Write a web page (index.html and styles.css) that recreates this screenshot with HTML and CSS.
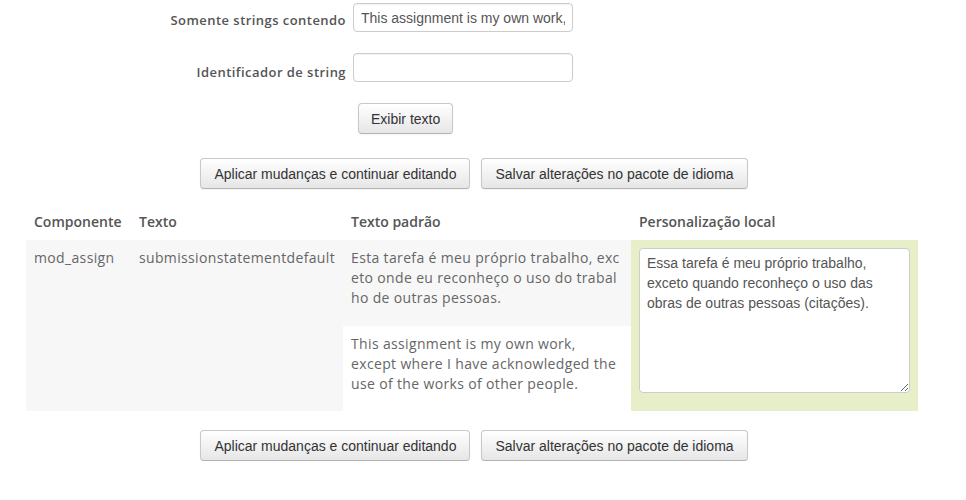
FILE: index.html
```html
<!DOCTYPE html>
<html lang="pt-br">
<head>
  <meta charset="UTF-8" />
  <title>Personalização do idioma</title>
  <link rel="stylesheet" href="styles.css">
</head>
<body>
  <div class="page">
    <!-- Filter -->
    <form class="filter">
      <div class="form-row">
        <label class="form-label" for="substring">Somente strings contendo</label>
        <input class="text-input" id="substring" type="text" value="This assignment is my own work,">
      </div>
      <div class="form-row">
        <label class="form-label label-low" for="stringid">Identificador de string</label>
        <input class="text-input" id="stringid" type="text">
      </div>
      <div class="form-row submit-row">
        <button class="btn" type="button">Exibir texto</button>
      </div>
    </form>

    <div class="actions">
      <button class="btn" type="button">Aplicar mudanças e continuar editando</button>
      <button class="btn" type="button">Salvar alterações no pacote de idioma</button>
    </div>

    <!-- Translator -->
    <table class="translator">
      <colgroup>
        <col class="col-component">
        <col class="col-stringid">
        <col class="col-master">
        <col class="col-local">
      </colgroup>
      <thead>
        <tr>
          <th>Componente</th>
          <th>Texto</th>
          <th>Texto padrão</th>
          <th>Personalização local</th>
        </tr>
      </thead>
      <tbody>
        <tr class="odd">
          <td rowspan="2">mod_assign</td>
          <td rowspan="2">submissionstatementdefault</td>
          <td class="master">Esta tarefa é meu próprio trabalho, exceto onde eu reconheço o uso do trabalho de outras pessoas.</td>
          <td rowspan="2" class="local modified">
            <textarea class="local-text">Essa tarefa é meu próprio trabalho, exceto quando reconheço o uso das obras de outras pessoas (citações).</textarea>
          </td>
        </tr>
        <tr class="even">
          <td class="master english">This assignment is my own work, except where I have acknowledged the use of the works of other people.</td>
        </tr>
      </tbody>
    </table>

    <div class="actions">
      <button class="btn" type="button">Aplicar mudanças e continuar editando</button>
      <button class="btn" type="button">Salvar alterações no pacote de idioma</button>
    </div>
  </div>
</body>
</html>
```

FILE: styles.css
```css
body {
  margin: 0;
  font-family: 'Open Sans', sans-serif;
  font-size: 13px;
  color: #555;
  background-color: #fff;
}

.page {
  width: 896px;
  margin-left: 26px;
  padding-top: 3px;
}

.filter {
  margin: 0;
}

.form-row {
  display: flex;
  align-items: flex-start;
  margin-bottom: 21px;
}

.form-label {
  width: 320px;
  padding-right: 7px;
  padding-top: 7px;
  text-align: right;
  font-weight: 600;
  letter-spacing: 0.45px;
  line-height: 20px;
  color: #555;
}

.label-low {
  padding-top: 9px;
}

.text-input {
  box-sizing: border-box;
  width: 220px;
  height: 29px;
  padding: 4px 7px;
  border: 1px solid #ccc;
  border-radius: 4px;
  font-family: 'Liberation Sans', Arial, sans-serif;
  font-size: 14px;
  color: #555;
  box-shadow: inset 0 1px 1px rgba(0, 0, 0, 0.05);
}

.submit-row {
  padding-left: 332px;
  margin-bottom: 24px;
}

.btn {
  height: 31px;
  padding: 0 12px;
  font-family: 'Liberation Sans', Arial, sans-serif;
  font-size: 14px;
  color: #333;
  background-color: #f5f5f5;
  background-image: linear-gradient(to bottom, #fff, #e6e6e6);
  border: 1px solid #c8c8c8;
  border-bottom-color: #b3b3b3;
  border-radius: 4px;
  box-shadow: inset 0 1px 0 rgba(255, 255, 255, 0.2), 0 1px 2px rgba(0, 0, 0, 0.05);
  cursor: pointer;
}

.actions {
  display: flex;
  justify-content: center;
  gap: 11px;
}

.actions .btn {
  padding: 0 13px;
}

.translator {
  width: 892px;
  table-layout: fixed;
  border-collapse: collapse;
  margin: 15px 0 19px;
}

.col-component { width: 105px; }
.col-stringid { width: 212px; }
.col-master { width: 288px; }
.col-local { width: 287px; }

.translator th,
.translator td {
  padding: 8px;
  font-size: 14px;
  line-height: 20px;
  text-align: left;
  vertical-align: top;
}

.translator th {
  font-weight: 600;
  color: #555;
}

.translator td {
  font-weight: 400;
  letter-spacing: 0.35px;
  color: #666;
}

.translator .odd td {
  background-color: #f7f7f7;
}

.translator .even td {
  background-color: #fff;
}

.master {
  word-break: break-all;
}

.master.english {
  word-break: normal;
}

.translator td.modified {
  background-color: #e7efc8;
}

.local-text {
  display: block;
  box-sizing: border-box;
  width: 100%;
  height: 145px;
  margin-bottom: 10px;
  padding: 4px 7px;
  border: 1px solid #ccc;
  border-radius: 4px;
  font-family: 'Liberation Sans', Arial, sans-serif;
  font-size: 14px;
  line-height: 20px;
  color: #555;
  background-color: #fff;
  resize: vertical;
}
```
